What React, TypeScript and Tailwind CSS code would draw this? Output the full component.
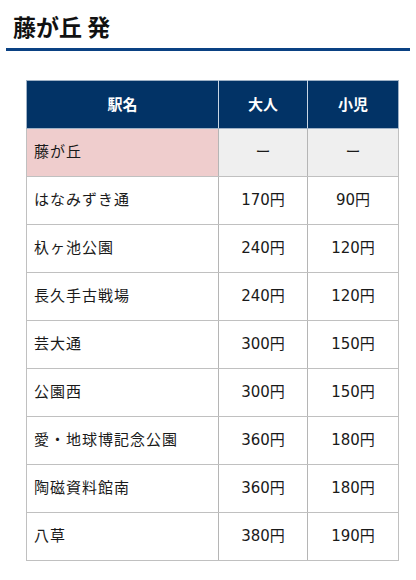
const rows: [string, string, string][] = [
  ['はなみずき通', '170円', '90円'],
  ['杁ヶ池公園', '240円', '120円'],
  ['長久手古戦場', '240円', '120円'],
  ['芸大通', '300円', '150円'],
  ['公園西', '300円', '150円'],
  ['愛・地球博記念公園', '360円', '180円'],
  ['陶磁資料館南', '360円', '180円'],
  ['八草', '380円', '190円'],
]

const font = { fontFamily: '"DejaVu Sans", "Noto Sans CJK JP", sans-serif' }
const jp = { fontFamily: '"Noto Sans CJK JP", sans-serif' }

export default function App() {
  return (
    <div className="w-[416px] h-[580px] bg-white px-[6px] pt-[12px]" style={font}>
      <h1 className="pl-[7px] text-[23px] leading-[28px] font-bold text-[#111]" style={jp}>
        藤が丘 発
      </h1>
      <div className="mt-[8px] h-[3px] bg-[#0a4183]" />

      <table className="mt-[29px] ml-[20px] w-[372px] border-collapse table-fixed text-[15px] text-[#1a1a1a]">
        <colgroup>
          <col className="w-[192px]" />
          <col className="w-[89px]" />
          <col className="w-[91px]" />
        </colgroup>
        <thead>
          <tr className="h-[48px] bg-[#023366] text-white font-bold text-[15px]">
            <th className="border border-[#9fb2c6] border-r-[#c8d6e4] border-r-dotted" style={jp}>駅名</th>
            <th className="border border-[#9fb2c6] border-x-[#c8d6e4] border-x-dotted" style={jp}>大人</th>
            <th className="border border-[#9fb2c6] border-l-[#c8d6e4] border-l-dotted" style={jp}>小児</th>
          </tr>
        </thead>
        <tbody>
          <tr className="h-[48px]">
            <td className="border border-[#c0c0c0] border-r-dotted border-r-[#b5b5b5] bg-[#efcdcd] pl-[7px] tracking-[1px]">藤が丘</td>
            <td className="border border-[#c0c0c0] border-x-dotted border-x-[#b5b5b5] bg-[#efefef] text-center">ー</td>
            <td className="border border-[#c0c0c0] border-l-dotted border-l-[#b5b5b5] bg-[#efefef] text-center">ー</td>
          </tr>
          {rows.map(([name, adult, child]) => (
            <tr key={name} className="h-[48px]">
              <td className="border border-[#c0c0c0] border-r-dotted border-r-[#b5b5b5] pl-[7px] tracking-[1px]">{name}</td>
              <td className="border border-[#c0c0c0] border-x-dotted border-x-[#b5b5b5] text-center">{adult}</td>
              <td className="border border-[#c0c0c0] border-l-dotted border-l-[#b5b5b5] text-center">{child}</td>
            </tr>
          ))}
        </tbody>
      </table>
    </div>
  )
}
